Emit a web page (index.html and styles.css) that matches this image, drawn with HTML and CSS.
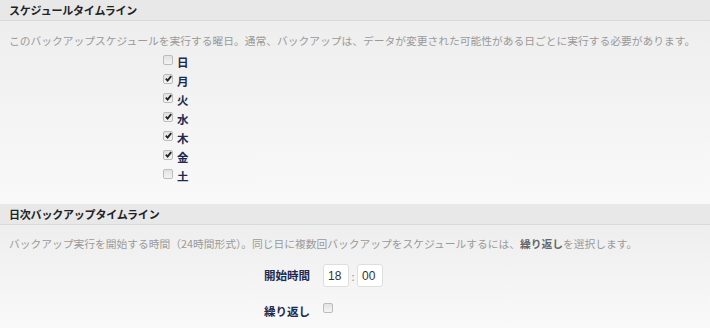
FILE: index.html
```html
<!DOCTYPE html>
<html lang="ja">
<head>
    <meta charset="UTF-8"/>
    <title>スケジュール</title>
    <link rel="stylesheet" href="styles.css">
</head>
<body>
<div class="panel">
    <h2 class="panel-hd">スケジュールタイムライン</h2>
    <div class="panel-bd week">
        <p class="note">このバックアップスケジュールを実行する曜日。通常、バックアップは、データが変更された可能性がある日ごとに実行する必要があります。</p>
        <ul class="days">
            <li><span class="chk"></span>日</li>
            <li><span class="chk on"><svg viewBox="0 0 10 10"><path d="M2 5.2l2 2.1 4-5" /></svg></span>月</li>
            <li><span class="chk on"><svg viewBox="0 0 10 10"><path d="M2 5.2l2 2.1 4-5" /></svg></span>火</li>
            <li><span class="chk on"><svg viewBox="0 0 10 10"><path d="M2 5.2l2 2.1 4-5" /></svg></span>水</li>
            <li><span class="chk on"><svg viewBox="0 0 10 10"><path d="M2 5.2l2 2.1 4-5" /></svg></span>木</li>
            <li><span class="chk on"><svg viewBox="0 0 10 10"><path d="M2 5.2l2 2.1 4-5" /></svg></span>金</li>
            <li><span class="chk"></span>土</li>
        </ul>
    </div>
</div>
<div class="panel">
    <h2 class="panel-hd">日次バックアップタイムライン</h2>
    <div class="panel-bd daily">
        <p class="note">バックアップ実行を開始する時間（24時間形式）。同じ日に複数回バックアップをスケジュールするには、<b>繰り返し</b>を選択します。</p>
        <div class="form">
            <label class="lbl">開始時間</label>
            <div class="time">
                <input class="box" type="text" value="18"><span class="colon">:</span><input class="box" type="text" value="00">
            </div>
            <label class="lbl lbl-rep">繰り返し</label>
            <div class="rep"><span class="chk"></span></div>
        </div>
    </div>
</div>
</body>
</html>
```
FILE: styles.css
```css
*{margin:0;padding:0;box-sizing:border-box;}
body{width:710px;height:328px;overflow:hidden;background:#f9f9f9;font-family:"Noto Sans CJK JP","Liberation Sans",sans-serif;}
ul,li{list-style:none;}
.panel-hd{height:21px;padding-left:9px;background:#e8e8e9;border-bottom:1px solid #d9d9d9;font-size:11px;line-height:20px;font-weight:bold;color:#222;letter-spacing:-0.2px;}
.panel:first-child .panel-hd{height:21px;}
.panel-bd{background:linear-gradient(#eeeeee,#f9f9f9);}
.week{padding-bottom:19px;}
.note{padding-left:9px;font-size:10.75px;line-height:19px;color:#9a9a9a;white-space:nowrap;}
.note b{color:#666;}
.week .note{padding-top:10px;}
.days{margin-top:2px;padding-left:163px;}
.days li{display:flex;align-items:flex-start;height:19px;line-height:21px;font-size:11.5px;font-weight:bold;color:#1d2b52;}
.chk{display:block;width:10px;height:10px;margin:3px 4px 0 0;border:1px solid #bcbcbc;border-radius:2px;background:linear-gradient(#e2e2e2,#f4f4f4);}
.chk svg{display:block;width:9px;height:9px;margin:-1px 0 0 0;fill:none;stroke:#222;stroke-width:2;}
.daily{height:102px;}
.daily .note{padding-top:9px;}
.form{display:grid;grid-template-columns:310px auto;column-gap:13px;margin-top:11px;}
.lbl{font-size:11.5px;font-weight:bold;color:#1d2b52;text-align:right;line-height:23px;}
.time{display:flex;align-items:center;}
.box{width:26px;height:23px;padding-left:4px;border:1px solid #dedede;border-radius:3px;background:#fff;font-family:"Liberation Sans",sans-serif;font-size:12px;color:#333;outline:none;}
.colon{width:8px;text-align:center;font-size:11px;color:#999;}
.lbl-rep{margin-top:13px;}
.rep{margin-top:16px;}
.rep .chk{margin-top:0;}
```
